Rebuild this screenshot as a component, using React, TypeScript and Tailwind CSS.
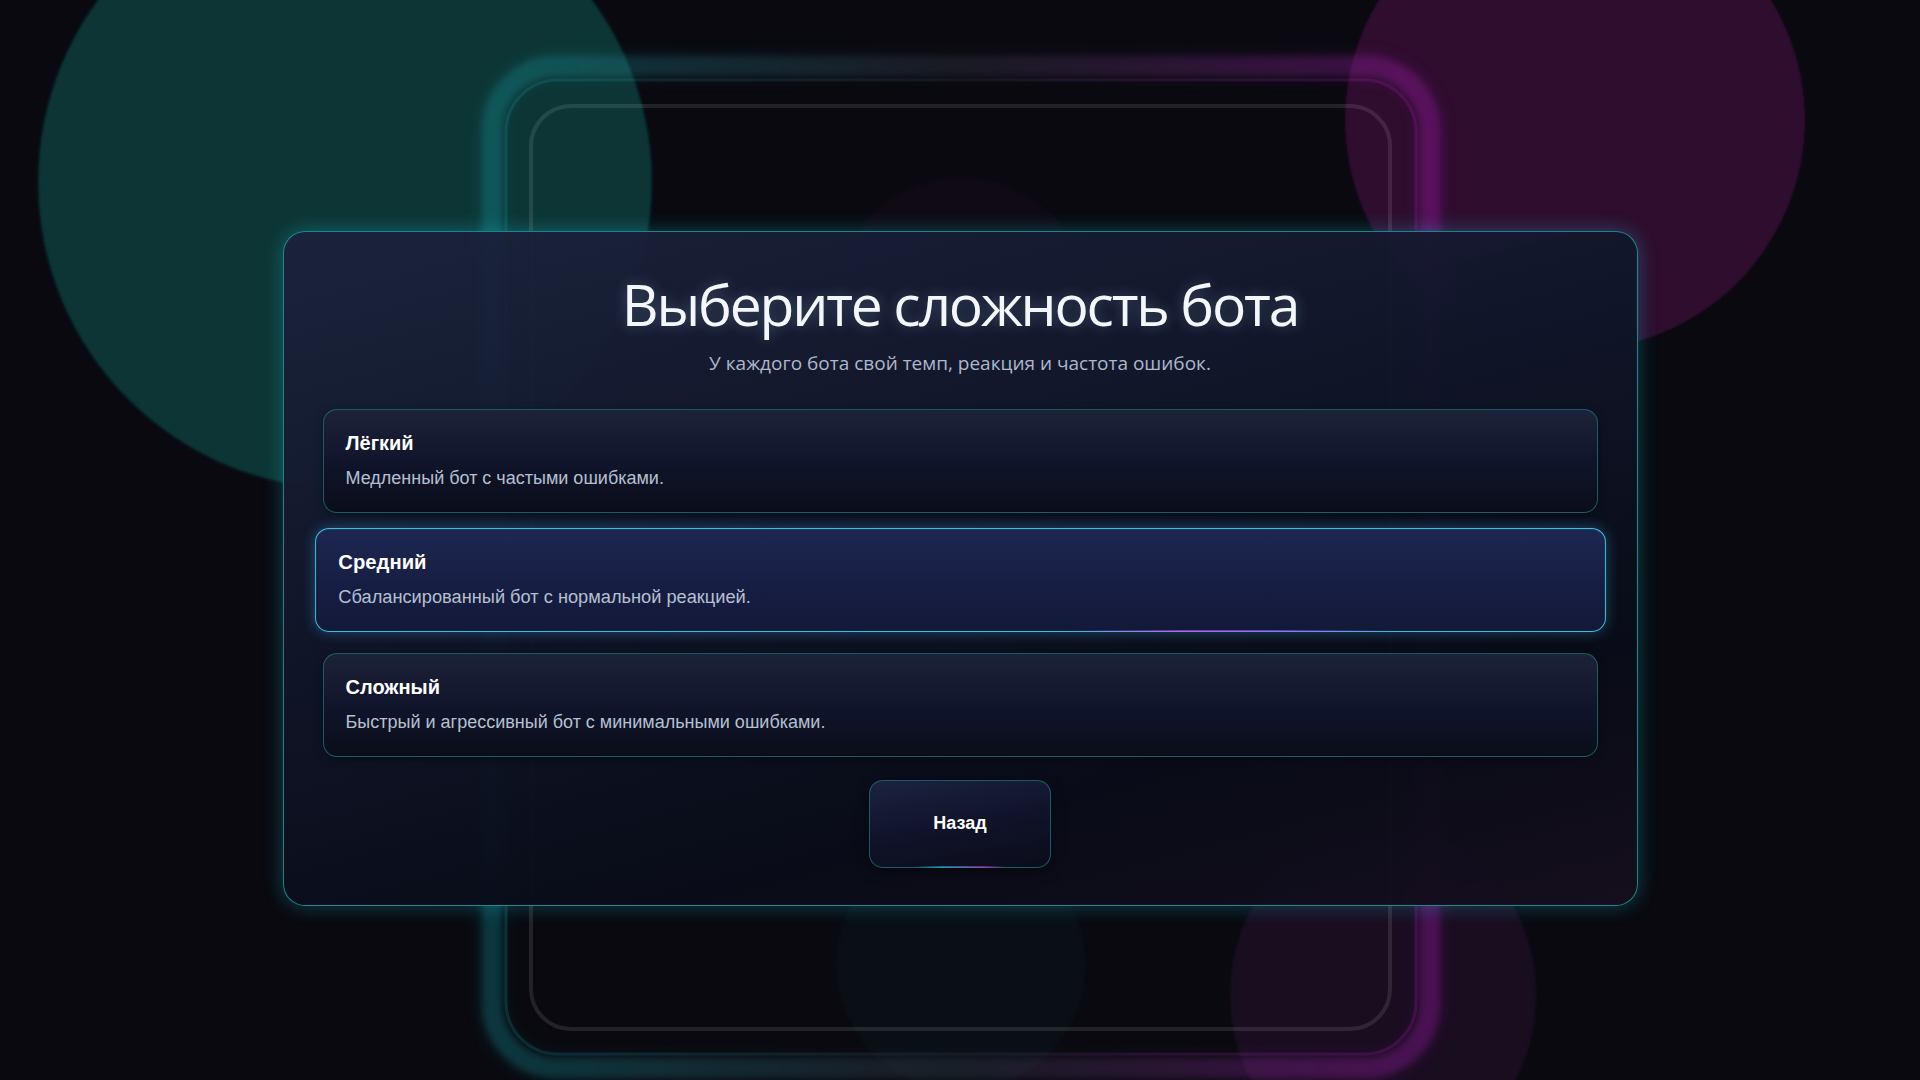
import { useState } from 'react';

type Level = { id: string; title: string; text: string };

const LEVELS: Level[] = [
  { id: 'easy', title: 'Лёгкий', text: 'Медленный бот с частыми ошибками.' },
  { id: 'medium', title: 'Средний', text: 'Сбалансированный бот с нормальной реакцией.' },
  { id: 'hard', title: 'Сложный', text: 'Быстрый и агрессивный бот с минимальными ошибками.' },
];

// Decorative background: glowing orbs and the device-like frames behind the panel.
function Backdrop() {
  return (
    <svg
      className="pointer-events-none absolute inset-0 h-full w-full"
      viewBox="0 0 1920 1080"
      preserveAspectRatio="none"
      aria-hidden="true"
    >
      <defs>
        <linearGradient id="frameStroke" x1="0" x2="1" y1="0" y2="0">
          <stop offset="0" stopColor="#17a9b4" />
          <stop offset="0.5" stopColor="#44465a" />
          <stop offset="1" stopColor="#c21fcf" />
        </linearGradient>
        <filter id="edge" x="-10%" y="-10%" width="120%" height="120%">
          <feGaussianBlur stdDeviation="1.5" />
        </filter>
        <filter id="glow" x="-10%" y="-10%" width="120%" height="120%">
          <feGaussianBlur stdDeviation="9" />
        </filter>
        <filter id="soft" x="-10%" y="-10%" width="120%" height="120%">
          <feGaussianBlur stdDeviation="3" />
        </filter>
      </defs>

      <circle cx="345" cy="182" r="307" fill="#073436" filter="url(#edge)" />
      <circle cx="1575" cy="120" r="230" fill="#2d0a2e" filter="url(#edge)" />
      <circle cx="962" cy="305" r="128" fill="#5a1a5a" opacity="0.07" filter="url(#edge)" />
      <circle cx="961" cy="965" r="125" fill="#145a60" opacity="0.07" filter="url(#edge)" />
      <ellipse cx="1383" cy="995" rx="153" ry="170" fill="#7a2a86" opacity="0.14" filter="url(#edge)" />

      <rect x="492" y="66" width="938" height="1002" rx="64" fill="none" stroke="url(#frameStroke)" strokeWidth="22" opacity="0.14" filter="url(#glow)" />
      <rect x="492" y="66" width="938" height="1002" rx="64" fill="none" stroke="url(#frameStroke)" strokeWidth="20" opacity="0.2" filter="url(#soft)" />
      <rect x="506" y="80" width="910" height="974" rx="52" fill="none" stroke="url(#frameStroke)" strokeWidth="3" opacity="0.18" />
      <rect x="531" y="106" width="859" height="923" rx="40" fill="none" stroke="#ffffff" strokeOpacity="0.1" strokeWidth="4" />
    </svg>
  );
}

function LevelCard({ level, active, onPick }: { level: Level; active: boolean; onPick: () => void }) {
  return (
    <button
      type="button"
      onClick={onPick}
      className={
        active
          ? 'relative block h-[104px] w-full -translate-y-[3px] scale-x-[1.0125] rounded-[14px] border-[1.5px] border-[#3cbddc] bg-[linear-gradient(180deg,#1d2750_0%,#161d42_60%,#131938_100%)] px-[22px] py-[19px] text-left shadow-[0_0_14px_rgba(56,189,248,0.35),inset_0_1px_0_rgba(255,255,255,0.06)]'
          : 'relative block h-[104px] w-full rounded-[14px] border border-[#1f6d74]/80 bg-[linear-gradient(180deg,#1c2239_0%,#10142a_55%,#0a0d19_100%)] px-[22px] py-[19px] text-left shadow-[0_2px_10px_rgba(0,0,0,0.35)]'
      }
    >
      <span className="block text-[20px] font-bold leading-[27px] text-white">{level.title}</span>
      <span className="mt-[8px] block text-[18px] leading-[27px] text-[#b5c0d2]">{level.text}</span>
      {active && (
        <span className="absolute -bottom-px left-[58%] h-[2px] w-[26%] rounded-full bg-[linear-gradient(90deg,transparent,#d946ef_35%,#a855f7_65%,transparent)] opacity-60" />
      )}
    </button>
  );
}

export default function App() {
  const [picked, setPicked] = useState('medium');

  return (
    <div className="relative min-h-screen w-full overflow-hidden bg-[#09090f] font-['Liberation_Sans',Arial,sans-serif]">
      <Backdrop />

      <main className="relative z-10 flex min-h-screen items-center justify-center pt-[56px]">
        <section className="w-[1355px] rounded-[22px] border border-[#1ea4a8]/80 bg-[linear-gradient(165deg,rgba(28,35,60,0.95)_0%,rgba(17,22,42,0.96)_40%,rgba(9,12,24,0.97)_75%,rgba(22,14,30,0.96)_100%)] px-[39px] pb-[37px] pt-[36px] shadow-[0_0_20px_rgba(34,211,238,0.3)]">
          <h1 className="text-center font-['Open_Sans',sans-serif] text-[57px] font-normal leading-[72px] tracking-[-2.2px] text-[#f3f6fb] [text-shadow:0_0_14px_rgba(180,220,255,0.3)]">
            Выберите сложность бота
          </h1>
          <p className="mt-[10px] text-center font-['Open_Sans',sans-serif] text-[19px] leading-[27px] text-[#adb8cc]">
            У каждого бота свой темп, реакция и частота ошибок.
          </p>

          <div className="mt-[32px] flex flex-col gap-[18px]">
            {LEVELS.map((l) => (
              <LevelCard key={l.id} level={l} active={picked === l.id} onPick={() => setPicked(l.id)} />
            ))}
          </div>

          <div className="mt-[23px] flex justify-center">
            <button
              type="button"
              className="relative h-[88px] w-[182px] rounded-[14px] border border-[#1f6d74]/80 bg-[linear-gradient(170deg,#1c2240_0%,#10132a_50%,#0b0c1a_100%)] text-[18px] font-bold text-white shadow-[0_4px_14px_rgba(0,0,0,0.45)]"
            >
              Назад
              <span className="absolute -bottom-px left-[25%] h-[2px] w-[50%] rounded-full bg-[linear-gradient(90deg,transparent,#22d3ee_30%,#d946ef_75%,transparent)] opacity-50" />
            </button>
          </div>
        </section>
      </main>
    </div>
  );
}
